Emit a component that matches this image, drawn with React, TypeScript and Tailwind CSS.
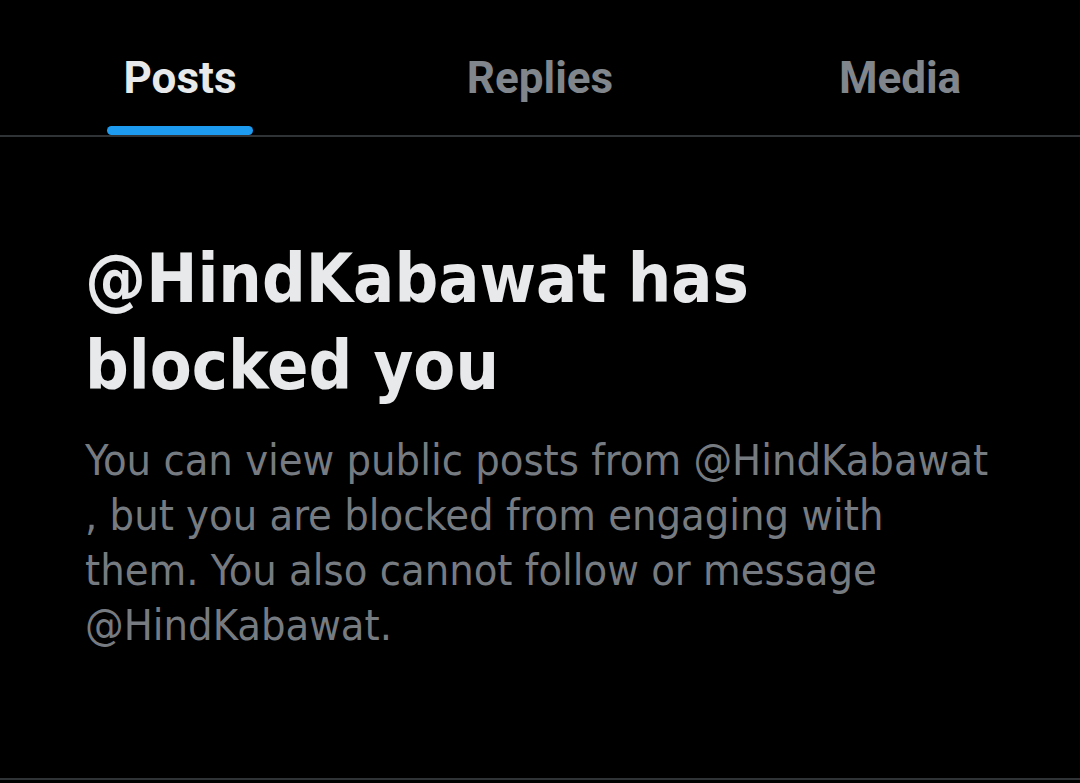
export default function App() {
  const tabs = ["Posts", "Replies", "Media"];
  return (
    <div className="w-[1080px] h-[783px] bg-black overflow-hidden flex flex-col">
      <div className="flex h-[137px] border-b-2 border-[#2f3336]">
        {tabs.map((t, i) => (
          <div key={t} className="flex-1 flex justify-center">
            <div className="relative flex flex-col items-center">
              <span
                className={`pt-[50px] text-[44px] leading-[56px] font-bold font-['Roboto',sans-serif] ${
                  i === 0 ? "text-[#e7e9ea]" : "text-[#80868b]"
                }`}
              >
                {t}
              </span>
              {i === 0 && (
                <div className="absolute bottom-0 left-1/2 -translate-x-1/2 w-[146px] h-[9px] rounded-full bg-[#1d9bf0]" />
              )}
            </div>
          </div>
        ))}
      </div>
      <div className="flex-1 px-[85px] pt-[98px] border-b-2 border-[#2f3336]">
        <h1 className="text-[68px] leading-[87px] font-bold text-[#e7e9ea] font-['DejaVu_Sans_Condensed','Roboto',sans-serif]">
          @HindKabawat has
          <br />
          blocked you
        </h1>
        <p className="mt-[24px] text-[43px] leading-[55px] text-[#767b81] font-['DejaVu_Sans_Condensed','Roboto',sans-serif]">
          You can view public posts from @HindKabawat
          <br />, but you are blocked from engaging with
          <br />
          them. You also cannot follow or message
          <br />
          @HindKabawat.
        </p>
      </div>
      <div className="h-[3px]" />
    </div>
  );
}
